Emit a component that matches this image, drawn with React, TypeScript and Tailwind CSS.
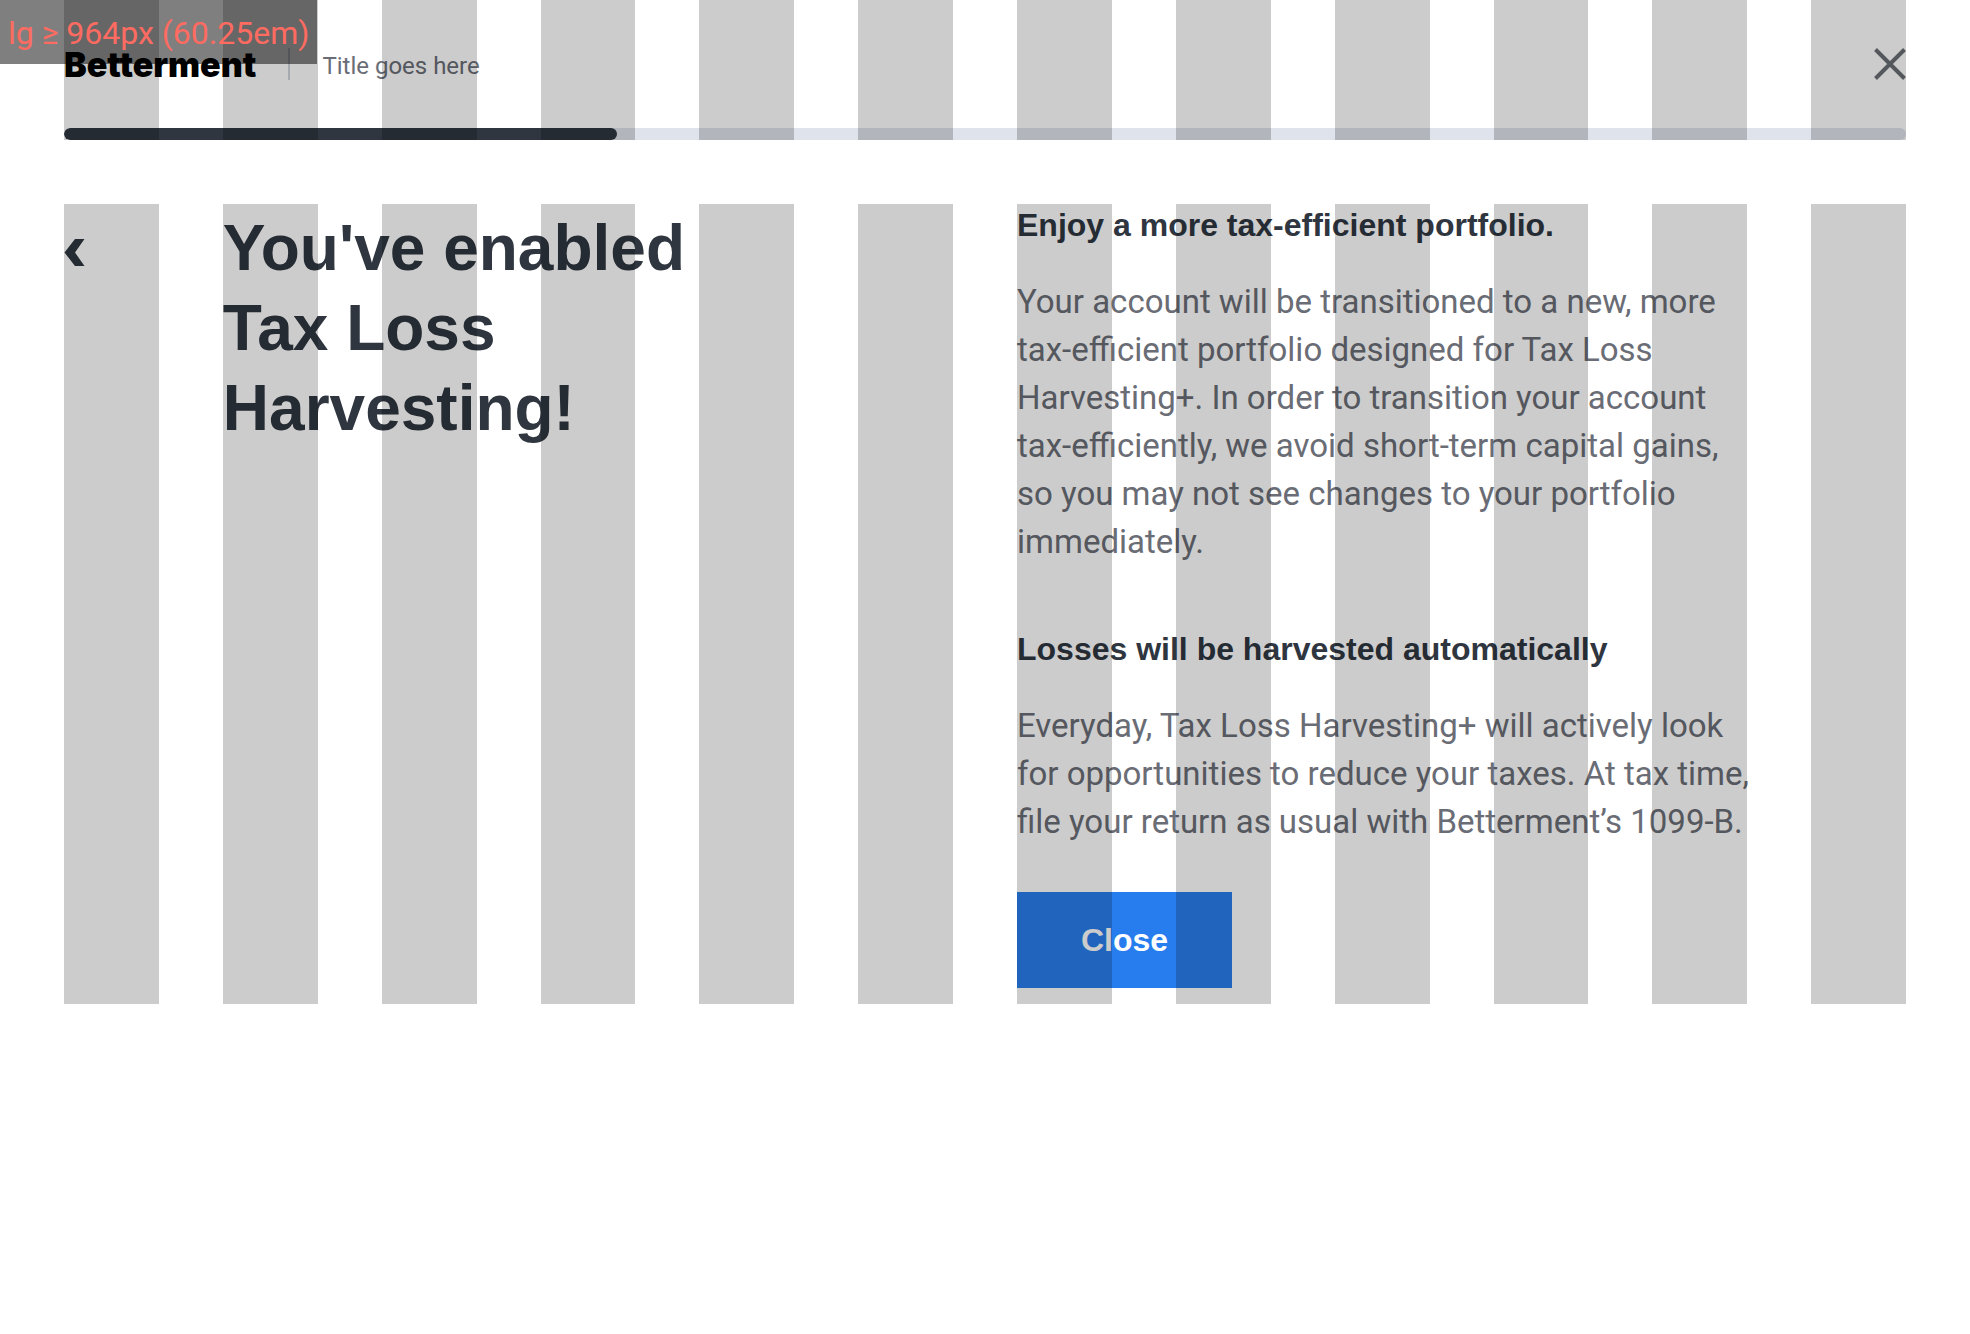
import React from "react";

const COLUMNS = Array.from({ length: 12 }, (_, i) => i);

function GridOverlay() {
  return (
    <div
      aria-hidden="true"
      className="pointer-events-none absolute inset-x-16 inset-y-0 z-10 grid grid-cols-12 gap-16"
    >
      {COLUMNS.map((column) => (
        <div key={column} className="bg-black/20" />
      ))}
    </div>
  );
}

function BreakpointBadge() {
  return (
    <div className="absolute top-0 left-0 z-20 flex h-16 items-center bg-black/50 px-2 pt-0.5 text-[32px] whitespace-nowrap text-[#ff6b61]">
      lg ≥ 964px (60.25em)
    </div>
  );
}

function Progress({ value }: { value: number }) {
  return (
    <div
      role="progressbar"
      aria-label="Progress"
      aria-valuenow={value}
      aria-valuemin={0}
      aria-valuemax={100}
      className="h-3 overflow-hidden rounded-full bg-[#dfe3eb]"
    >
      <div className="h-full rounded-full bg-[#2f363f]" style={{ width: `${value}%` }} />
    </div>
  );
}

function Header() {
  return (
    <header className="relative px-16">
      <div className="flex h-32 items-center">
        <a href="#" className="font-[Inter,sans-serif] text-[34px] font-black text-black">
          Betterment
        </a>
        <div className="mx-8 h-8 w-0.5 bg-[#d0d4da]" />
        <p className="pt-1 text-2xl text-[#6a6d75]">Title goes here</p>
        <button type="button" aria-label="Close" className="ml-auto">
          <svg width="32" height="32" viewBox="0 0 32 32" fill="none" stroke="#6a6f75" strokeWidth="4">
            <path d="M1.5 1.5 30.5 30.5M30.5 1.5 1.5 30.5" />
          </svg>
        </button>
      </div>
      <Progress value={30} />
      <GridOverlay />
    </header>
  );
}

function Section({ title, children }: { title: string; children: React.ReactNode }) {
  return (
    <section>
      <h2 className="mb-8 font-['Liberation_Sans',Arial,sans-serif] text-[32px] leading-[42px] font-bold text-[#2f363f]">
        {title}
      </h2>
      <p className="-mr-2 text-[33px] leading-12 text-[#6a6d75]">{children}</p>
    </section>
  );
}

export default function App() {
  return (
    <div className="relative min-h-screen bg-white font-[Roboto,sans-serif]">
      <BreakpointBadge />
      <Header />
      <main className="relative mt-16 grid grid-cols-12 gap-x-16 px-16 pb-4">
        <div>
          <button type="button" aria-label="Back" className="flex h-24 items-center">
            <svg width="21" height="27" viewBox="0 0 21 27" fill="#2f363f">
              <path d="M11 0H20.500L11 13.500 20.500 27H11L.5 13.500Z" />
            </svg>
          </button>
        </div>
        <h1 className="col-span-4 pt-1 font-['Liberation_Sans',Arial,sans-serif] text-[64px] leading-20 font-bold text-[#2f363f]">
          You've enabled Tax Loss Harvesting!
        </h1>
        <div className="col-span-5 col-start-7 flex flex-col items-start">
          <div className="flex flex-col gap-[62px]">
            <Section title="Enjoy a more tax-efficient portfolio.">
              Your account will be transitioned to a new, more tax-efficient portfolio designed for Tax Loss
              Harvesting+. In order to transition your account tax-efficiently, we avoid short-term capital
              gains, so you may not see changes to your portfolio immediately.
            </Section>
            <Section title="Losses will be harvested automatically">
              Everyday, Tax Loss Harvesting+ will actively look for opportunities to reduce your taxes. At tax
              time, file your return as usual with Betterment’s 1099-B.
            </Section>
          </div>
          <button
            type="button"
            className="mt-[46px] h-24 bg-[#287dee] px-16 font-['Liberation_Sans',Arial,sans-serif] text-[32px] font-bold text-white"
          >
            Close
          </button>
        </div>
        <GridOverlay />
      </main>
    </div>
  );
}
